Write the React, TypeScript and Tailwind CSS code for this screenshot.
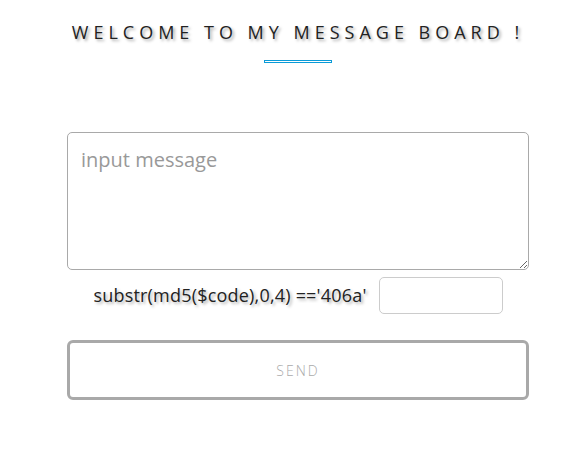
import React from 'react';

const App: React.FC = () => {
  return (
    <div className="w-[579px] h-[464px] bg-white pl-[17px] flex flex-col items-center" style={{ fontFamily: '"Open Sans", "Noto Sans", sans-serif' }}>
      <h1 className="mt-[20px] text-[18px] leading-[24px] tracking-[5px] text-[#222] [text-shadow:2px_2px_3px_rgba(0,0,0,0.35)] font-normal">
        WELCOME TO MY MESSAGE BOARD !
      </h1>
      <div className="mt-[16px] w-[68px] h-[3px] border border-[#0a9bd8]" />

      <div className="mt-[69px] w-[462px] flex flex-col">
        <textarea
          placeholder="input message"
          className="w-[462px] h-[138px] border border-[#a9a9a9] rounded-[5px] px-[13px] pt-[14px] pb-[10px] text-[20px] leading-[26px] text-[#333] placeholder:text-[#999] outline-none"
        />
        <div className="mt-[7px] flex items-center justify-center gap-[12px]">
          <span className="text-[18px] tracking-[0.2px] text-[#222] [text-shadow:2px_2px_3px_rgba(0,0,0,0.3)]">
            substr(md5($code),0,4) =='406a'
          </span>
          <input className="w-[124px] h-[37px] border border-[#ccc] rounded-[5px] px-2 outline-none" />
        </div>
        <button className="mt-[26px] w-[462px] h-[60px] border-[3px] border-[#a9a9a9] rounded-[6px] bg-white text-[14px] tracking-[2px] text-[#aaa] font-light">
          SEND
        </button>
      </div>
    </div>
  );
};

export default App;
